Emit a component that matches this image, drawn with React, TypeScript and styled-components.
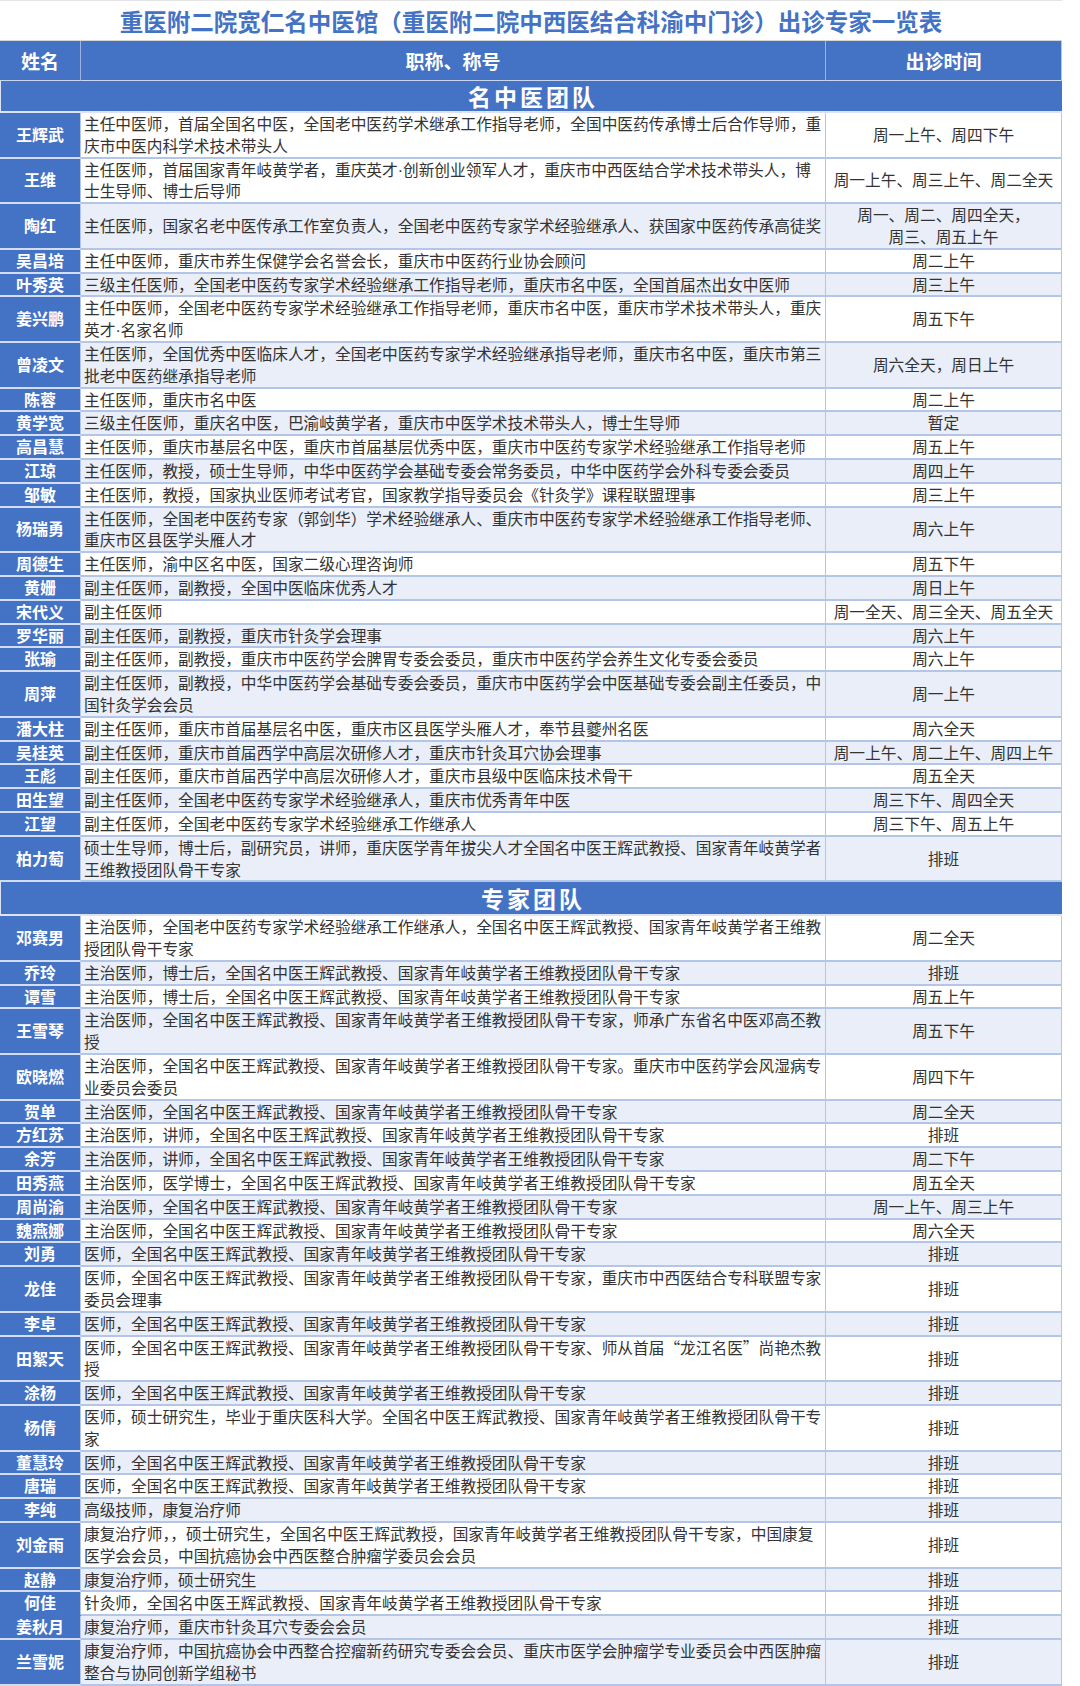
import React from 'react';
import styled, { createGlobalStyle } from 'styled-components';

const colors = {
  blue: '#4472c4',
  stripe: '#e9eef8',
  line: '#b4c6e7',
  nameLine: '#d3ddf1',
  text: '#333333',
};

type Doctor = {
  name: string;
  desc: string[];
  time: string[];
  shade?: boolean;
  joinNext?: boolean;
};

const famous: Doctor[] = [
  { name: '王辉武', desc: ['主任中医师，首届全国名中医，全国老中医药学术继承工作指导老师，全国中医药传承博士后合作导师，重', '庆市中医内科学术技术带头人'], time: ['周一上午、周四下午'] },
  { name: '王维', desc: ['主任医师，首届国家青年岐黄学者，重庆英才·创新创业领军人才，重庆市中西医结合学术技术带头人，博', '士生导师、博士后导师'], time: ['周一上午、周三上午、周二全天'] },
  { name: '陶红', desc: ['主任医师，国家名老中医传承工作室负责人，全国老中医药专家学术经验继承人、获国家中医药传承高徒奖'], time: ['周一、周二、周四全天，', '周三、周五上午'], shade: true },
  { name: '吴昌培', desc: ['主任中医师，重庆市养生保健学会名誉会长，重庆市中医药行业协会顾问'], time: ['周二上午'] },
  { name: '叶秀英', desc: ['三级主任医师，全国老中医药专家学术经验继承工作指导老师，重庆市名中医，全国首届杰出女中医师'], time: ['周三上午'], shade: true },
  { name: '姜兴鹏', desc: ['主任中医师，全国老中医药专家学术经验继承工作指导老师，重庆市名中医，重庆市学术技术带头人，重庆', '英才·名家名师'], time: ['周五下午'] },
  { name: '曾凌文', desc: ['主任医师，全国优秀中医临床人才，全国老中医药专家学术经验继承指导老师，重庆市名中医，重庆市第三', '批老中医药继承指导老师'], time: ['周六全天，周日上午'], shade: true },
  { name: '陈蓉', desc: ['主任医师，重庆市名中医'], time: ['周二上午'] },
  { name: '黄学宽', desc: ['三级主任医师，重庆名中医，巴渝岐黄学者，重庆市中医学术技术带头人，博士生导师'], time: ['暂定'], shade: true },
  { name: '高昌慧', desc: ['主任医师，重庆市基层名中医，重庆市首届基层优秀中医，重庆市中医药专家学术经验继承工作指导老师'], time: ['周五上午'] },
  { name: '江琼', desc: ['主任医师，教授，硕士生导师，中华中医药学会基础专委会常务委员，中华中医药学会外科专委会委员'], time: ['周四上午'], shade: true },
  { name: '邹敏', desc: ['主任医师，教授，国家执业医师考试考官，国家教学指导委员会《针灸学》课程联盟理事'], time: ['周三上午'] },
  { name: '杨瑞勇', desc: ['主任医师，全国老中医药专家（郭剑华）学术经验继承人、重庆市中医药专家学术经验继承工作指导老师、', '重庆市区县医学头雁人才'], time: ['周六上午'], shade: true },
  { name: '周德生', desc: ['主任医师，渝中区名中医，国家二级心理咨询师'], time: ['周五下午'] },
  { name: '黄姗', desc: ['副主任医师，副教授，全国中医临床优秀人才'], time: ['周日上午'], shade: true },
  { name: '宋代义', desc: ['副主任医师'], time: ['周一全天、周三全天、周五全天'] },
  { name: '罗华丽', desc: ['副主任医师，副教授，重庆市针灸学会理事'], time: ['周六上午'], shade: true },
  { name: '张瑜', desc: ['副主任医师，副教授，重庆市中医药学会脾胃专委会委员，重庆市中医药学会养生文化专委会委员'], time: ['周六上午'] },
  { name: '周萍', desc: ['副主任医师，副教授，中华中医药学会基础专委会委员，重庆市中医药学会中医基础专委会副主任委员，中', '国针灸学会会员'], time: ['周一上午'], shade: true },
  { name: '潘大柱', desc: ['副主任医师，重庆市首届基层名中医，重庆市区县医学头雁人才，奉节县夔州名医'], time: ['周六全天'] },
  { name: '吴桂英', desc: ['副主任医师，重庆市首届西学中高层次研修人才，重庆市针灸耳穴协会理事'], time: ['周一上午、周二上午、周四上午'], shade: true },
  { name: '王彪', desc: ['副主任医师，重庆市首届西学中高层次研修人才，重庆市县级中医临床技术骨干'], time: ['周五全天'] },
  { name: '田生望', desc: ['副主任医师，全国老中医药专家学术经验继承人，重庆市优秀青年中医'], time: ['周三下午、周四全天'], shade: true },
  { name: '江望', desc: ['副主任医师，全国老中医药专家学术经验继承工作继承人'], time: ['周三下午、周五上午'] },
  { name: '柏力萄', desc: ['硕士生导师，博士后，副研究员，讲师，重庆医学青年拔尖人才全国名中医王辉武教授、国家青年岐黄学者', '王维教授团队骨干专家'], time: ['排班'], shade: true },
];

const teamA = '全国名中医王辉武教授、国家青年岐黄学者王维教授团队骨干专家';

const experts: Doctor[] = [
  { name: '邓赛男', desc: ['主治医师，全国老中医药专家学术经验继承工作继承人，全国名中医王辉武教授、国家青年岐黄学者王维教', '授团队骨干专家'], time: ['周二全天'] },
  { name: '乔玲', desc: ['主治医师，博士后，' + teamA], time: ['排班'], shade: true },
  { name: '谭雪', desc: ['主治医师，博士后，' + teamA], time: ['周五上午'] },
  { name: '王雪琴', desc: ['主治医师，' + teamA + '，师承广东省名中医邓高丕教', '授'], time: ['周五下午'], shade: true },
  { name: '欧晓燃', desc: ['主治医师，' + teamA + '。重庆市中医药学会风湿病专', '业委员会委员'], time: ['周四下午'] },
  { name: '贺单', desc: ['主治医师，' + teamA], time: ['周二全天'], shade: true },
  { name: '方红苏', desc: ['主治医师，讲师，' + teamA], time: ['排班'] },
  { name: '余芳', desc: ['主治医师，讲师，' + teamA], time: ['周二下午'], shade: true },
  { name: '田秀燕', desc: ['主治医师，医学博士，' + teamA], time: ['周五全天'] },
  { name: '周尚渝', desc: ['主治医师，' + teamA], time: ['周一上午、周三上午'], shade: true },
  { name: '魏燕娜', desc: ['主治医师，' + teamA], time: ['周六全天'] },
  { name: '刘勇', desc: ['医师，' + teamA], time: ['排班'], shade: true },
  { name: '龙佳', desc: ['医师，' + teamA + '，重庆市中西医结合专科联盟专家', '委员会理事'], time: ['排班'] },
  { name: '李卓', desc: ['医师，' + teamA], time: ['排班'], shade: true },
  { name: '田絮天', desc: ['医师，' + teamA + '、师从首届“龙江名医”尚艳杰教', '授'], time: ['排班'] },
  { name: '涂杨', desc: ['医师，' + teamA], time: ['排班'], shade: true },
  { name: '杨倩', desc: ['医师，硕士研究生，毕业于重庆医科大学。全国名中医王辉武教授、国家青年岐黄学者王维教授团队骨干专', '家'], time: ['排班'] },
  { name: '董慧玲', desc: ['医师，' + teamA], time: ['排班'], shade: true },
  { name: '唐瑞', desc: ['医师，' + teamA], time: ['排班'] },
  { name: '李纯', desc: ['高级技师，康复治疗师'], time: ['排班'], shade: true },
  { name: '刘金雨', desc: ['康复治疗师，，硕士研究生，全国名中医王辉武教授，国家青年岐黄学者王维教授团队骨干专家，中国康复', '医学会会员，中国抗癌协会中西医整合肿瘤学委员会会员'], time: ['排班'] },
  { name: '赵静', desc: ['康复治疗师，硕士研究生'], time: ['排班'], shade: true },
  { name: '何佳', desc: ['针灸师，' + teamA], time: ['排班'], joinNext: true },
  { name: '姜秋月', desc: ['康复治疗师，重庆市针灸耳穴专委会会员'], time: ['排班'], shade: true },
  { name: '兰雪妮', desc: ['康复治疗师，中国抗癌协会中西整合控瘤新药研究专委会会员、重庆市医学会肿瘤学专业委员会中西医肿瘤', '整合与协同创新学组秘书'], time: ['排班'], shade: true },
];

const GlobalStyle = createGlobalStyle`
  html, body {
    margin: 0;
    padding: 0;
    background: #ffffff;
  }
  body {
    font-family: "Noto Sans CJK SC", "Noto Sans", sans-serif;
  }
`;

const Sheet = styled.div`
  width: 1062px;
`;

const Title = styled.h1`
  margin: 0;
  height: 41px;
  box-sizing: border-box;
  display: flex;
  align-items: center;
  justify-content: center;
  font-size: 23.5px;
  font-weight: 700;
  color: ${colors.blue};
  border-top: 1px solid #e4e4e4;
  border-bottom: 1px solid #d6d6d6;
`;

const Columns = styled.div`
  display: grid;
  grid-template-columns: 81px 745px 236px;
`;

const HeadCell = styled.div`
  height: 40px;
  box-sizing: border-box;
  display: flex;
  align-items: center;
  justify-content: center;
  background: ${colors.blue};
  color: #ffffff;
  font-size: 19px;
  font-weight: 700;
  border-bottom: 1px solid #c9d6ef;
  border-right: 1px solid #9db4e0;

  &:last-child {
    border-right: 1px solid ${colors.line};
  }
`;

const Section = styled.div<{ $height: number }>`
  height: ${(p) => p.$height}px;
  box-sizing: border-box;
  display: flex;
  align-items: center;
  justify-content: center;
  background: ${colors.blue};
  color: #ffffff;
  font-size: 23px;
  font-weight: 700;
  letter-spacing: 3px;
  padding-left: 3px;
  border-bottom: 2px solid #dbe3f4;
  border-left: 1px solid #dbe3f4;
`;

const NameCell = styled.div<{ $join?: boolean }>`
  display: flex;
  align-items: center;
  justify-content: center;
  background: ${colors.blue};
  color: #ffffff;
  font-size: 16px;
  font-weight: 700;
  line-height: 21.8px;
  border-bottom: 2px solid ${(p) => (p.$join ? colors.blue : colors.nameLine)};
  border-right: 1px solid ${colors.line};
`;

const DescCell = styled.div<{ $shade?: boolean }>`
  display: flex;
  flex-direction: column;
  justify-content: center;
  padding-left: 3px;
  background: ${(p) => (p.$shade ? colors.stripe : '#ffffff')};
  color: ${colors.text};
  font-size: 15.7px;
  line-height: 21.8px;
  white-space: nowrap;
  overflow: hidden;
  border-bottom: 2px solid ${colors.line};
  border-right: 1px solid ${colors.line};
`;

const TimeCell = styled(DescCell)`
  align-items: center;
  padding-left: 0;
  text-align: center;
`;

const Line = styled.span`
  display: block;
  height: 21.8px;
`;

// the middle dot is half width in the original, not the CJK full-width one
const Dot = styled.span`
  font-family: "Liberation Sans", sans-serif;
  line-height: 0;
`;

function renderLine(text: string) {
  const parts = text.split('·');
  return parts.map((p, i) => (
    <React.Fragment key={i}>
      {i > 0 && <Dot>·</Dot>}
      {p}
    </React.Fragment>
  ));
}

function Row({ doctor }: { doctor: Doctor }) {
  return (
    <Columns>
      <NameCell $join={doctor.joinNext}>{doctor.name}</NameCell>
      <DescCell $shade={doctor.shade}>
        {doctor.desc.map((t, i) => (
          <Line key={i}>{renderLine(t)}</Line>
        ))}
      </DescCell>
      <TimeCell $shade={doctor.shade}>
        {doctor.time.map((t, i) => (
          <Line key={i}>{t}</Line>
        ))}
      </TimeCell>
    </Columns>
  );
}

export default function App() {
  return (
    <>
      <GlobalStyle />
      <Sheet>
        <Title>重医附二院宽仁名中医馆（重医附二院中西医结合科渝中门诊）出诊专家一览表</Title>
        <Columns>
          <HeadCell>姓名</HeadCell>
          <HeadCell>职称、称号</HeadCell>
          <HeadCell>出诊时间</HeadCell>
        </Columns>
        <Section $height={32}>名中医团队</Section>
        {famous.map((d) => (
          <Row key={d.name} doctor={d} />
        ))}
        <Section $height={34}>专家团队</Section>
        {experts.map((d) => (
          <Row key={d.name} doctor={d} />
        ))}
      </Sheet>
    </>
  );
}
